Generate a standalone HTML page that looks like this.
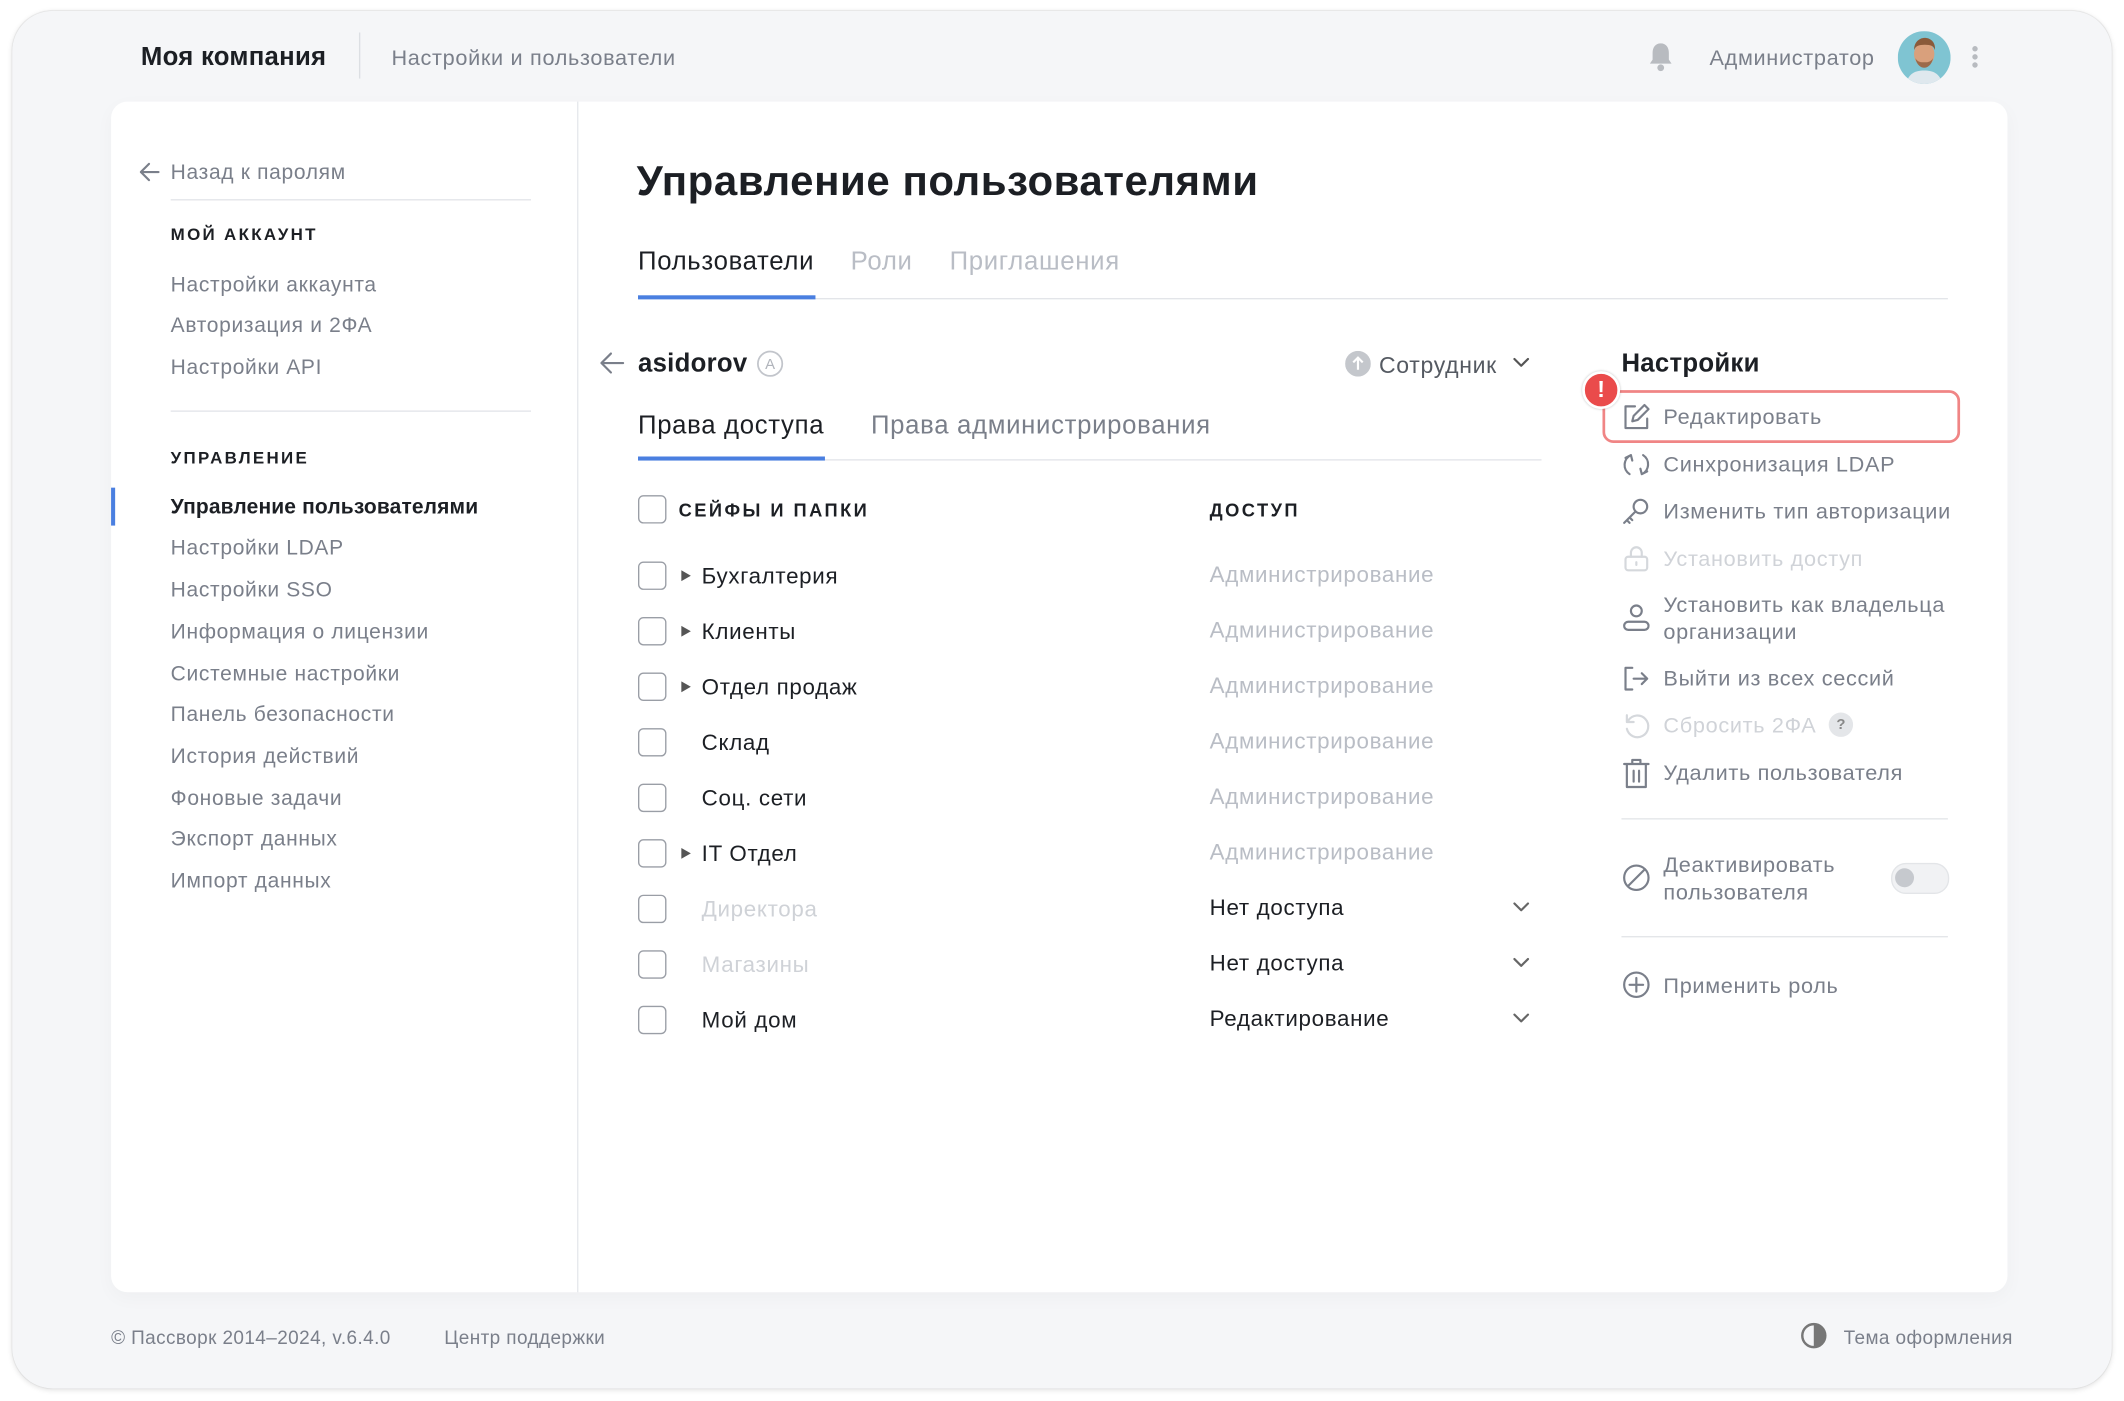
<!DOCTYPE html>
<html><head><meta charset="utf-8"><style>
html,body{margin:0;padding:0;background:#fff;width:2124px;height:1400px;overflow:hidden}
#s{position:absolute;left:0;top:0;width:1568px;height:1034px;transform:scale(1.35459);transform-origin:0 0;font-family:"Liberation Sans","DejaVu Sans",sans-serif}
.frame{position:absolute;left:9px;top:8px;width:1550px;height:1017px;background:#f5f6f8;border-radius:30px;box-shadow:0 1px 4px rgba(0,0,0,.12),0 0 1px rgba(0,0,0,.15)}
.card{position:absolute;left:82px;top:75px;width:1400px;height:879px;background:#fff;border-radius:12px;box-shadow:0 4px 14px rgba(0,0,0,.03)}
.t{position:absolute;white-space:nowrap;transform:translateY(calc(-50% + 1.5px));line-height:1.2;letter-spacing:0.5px}
.g{color:#7a7f8a}.lg{color:#b9bdc5}.d{color:#1c1f24}
.hr{position:absolute;height:1px;background:#e3e5e9}
.cb{position:absolute;width:19px;height:19px;border:1.5px solid #9a9ea6;border-radius:4px;transform:translateY(-50%)}
.tri{position:absolute;width:0;height:0;border-left:7px solid #555;border-top:4px solid transparent;border-bottom:4px solid transparent;transform:translateY(-50%)}
svg{position:absolute}
.ic{fill:none;stroke:#7a7f8a;stroke-width:1.6;stroke-linecap:round;stroke-linejoin:round}
</style></head><body><div id="s">
<div class="frame"></div>
<div class="t d" style="left:104px;top:42px;font-size:19px;font-weight:bold;letter-spacing:0.2px">Моя компания</div>
<div style="position:absolute;left:265px;top:24px;width:1px;height:34px;background:#dcdfe3"></div>
<div class="t g" style="left:289px;top:42px;font-size:16px">Настройки и пользователи</div>
<svg style="left:1215px;top:30px" width="22" height="24" viewBox="0 0 22 24"><path d="M11 2c-4 0-6 3-6 7v5l-2 3h16l-2-3V9c0-4-2-7-6-7z" fill="#b8bbc0"/><circle cx="11" cy="20" r="2.5" fill="#b8bbc0"/></svg>
<div class="t g" style="left:1262px;top:42px;font-size:16px">Администратор</div>
<svg style="left:1401px;top:23px" width="39" height="39" viewBox="0 0 39 39"><defs><clipPath id="c"><circle cx="19.5" cy="19.5" r="19.5"/></clipPath></defs><g clip-path="url(#c)"><rect width="39" height="39" fill="#7fc4d2"/><path d="M6 39c2-8 7-10 13.5-10S31 31 33 39z" fill="#dfe8ee"/><ellipse cx="19.5" cy="17" rx="7.5" ry="9" fill="#d9a07c"/><path d="M12 14c0-6 4-9 8-9s8 3 7.5 9c-1-3-3-4-7.5-4s-7 1-8 4z" fill="#8a5a3a"/><path d="M13 20c1 5 4 7 6.5 7s5.5-2 6.5-7c-2 3-4 3-6.5 3s-4.5 0-6.5-3z" fill="#9b6a4a"/></g></svg>
<div style="position:absolute;left:1456px;top:34px;width:4px;height:4px;border-radius:2px;background:#b8bbc0;box-shadow:0 6px 0 #b8bbc0,0 12px 0 #b8bbc0"></div>

<div class="card"></div>
<div style="position:absolute;left:426px;top:75px;width:1px;height:879px;background:#e6e8ec"></div>

<svg style="left:102px;top:119px" width="17" height="16" viewBox="0 0 17 16"><path class="ic" d="M15 8H2M8 2L2 8l6 6"/></svg>
<div class="t g" style="left:126px;top:127px;font-size:15.5px">Назад к паролям</div>
<div class="hr" style="left:126px;top:147px;width:266px"></div>
<div class="t d" style="left:126px;top:172px;font-size:12.5px;font-weight:bold;letter-spacing:1.7px">МОЙ АККАУНТ</div>
<div class="t g" style="left:126px;top:210px;font-size:15.5px">Настройки аккаунта</div>
<div class="t g" style="left:126px;top:240px;font-size:15.5px">Авторизация и 2ФА</div>
<div class="t g" style="left:126px;top:271px;font-size:15.5px">Настройки API</div>
<div class="hr" style="left:126px;top:303px;width:266px"></div>
<div class="t d" style="left:126px;top:337px;font-size:12.5px;font-weight:bold;letter-spacing:1.7px">УПРАВЛЕНИЕ</div>
<div style="position:absolute;left:82px;top:360px;width:3px;height:28px;background:#4a7fe0"></div>
<div class="t d" style="left:126px;top:374px;font-size:15.5px;font-weight:bold;letter-spacing:0.1px">Управление пользователями</div>
<div class="t g" style="left:126px;top:404px;font-size:15.5px">Настройки LDAP</div>
<div class="t g" style="left:126px;top:435px;font-size:15.5px">Настройки SSO</div>
<div class="t g" style="left:126px;top:466px;font-size:15.5px">Информация о лицензии</div>
<div class="t g" style="left:126px;top:497px;font-size:15.5px">Системные настройки</div>
<div class="t g" style="left:126px;top:527px;font-size:15.5px">Панель безопасности</div>
<div class="t g" style="left:126px;top:558px;font-size:15.5px">История действий</div>
<div class="t g" style="left:126px;top:589px;font-size:15.5px">Фоновые задачи</div>
<div class="t g" style="left:126px;top:619px;font-size:15.5px">Экспорт данных</div>
<div class="t g" style="left:126px;top:650px;font-size:15.5px">Импорт данных</div>

<div class="t d" style="left:470px;top:132px;font-size:31px;font-weight:bold;letter-spacing:0.4px">Управление пользователями</div>
<div class="t d" style="left:471px;top:193px;font-size:19px">Пользователи</div>
<div class="t lg" style="left:628px;top:193px;font-size:19px">Роли</div>
<div class="t lg" style="left:701px;top:193px;font-size:19px">Приглашения</div>
<div class="hr" style="left:471px;top:220px;width:967px"></div>
<div style="position:absolute;left:471px;top:218px;width:131px;height:3px;background:#4a7fe0"></div>

<svg style="left:442px;top:259px" width="20" height="18" viewBox="0 0 20 18"><path class="ic" d="M18 9H2M9 2L2 9l7 7"/></svg>
<div class="t d" style="left:471px;top:268px;font-size:19px;font-weight:bold;letter-spacing:0.2px">asidorov</div>
<svg style="left:558px;top:258px" width="21" height="21" viewBox="0 0 21 21"><circle cx="10.5" cy="10.5" r="9" fill="none" stroke="#c2c5cb" stroke-width="1.3"/><text x="10.5" y="14.5" font-size="11" text-anchor="middle" fill="#b0b4bb" font-family="Liberation Sans">A</text></svg>
<svg style="left:993px;top:259px" width="19" height="19" viewBox="0 0 19 19"><circle cx="9.5" cy="9.5" r="9.5" fill="#c4c7cc"/><path d="M9.5 14V5M6 8.5l3.5-3.5 3.5 3.5" fill="none" stroke="#fff" stroke-width="1.6"/></svg>
<div class="t" style="left:1018px;top:269px;font-size:17px;color:#555a62">Сотрудник</div>
<svg style="left:1116px;top:263px" width="14" height="10" viewBox="0 0 14 10"><path class="ic" d="M2 2l5 5 5-5" style="stroke:#555"/></svg>

<div class="t d" style="left:471px;top:314px;font-size:19px">Права доступа</div>
<div class="t g" style="left:643px;top:314px;font-size:19px">Права администрирования</div>
<div class="hr" style="left:471px;top:339px;width:667px"></div>
<div style="position:absolute;left:471px;top:337px;width:138px;height:3px;background:#4a7fe0"></div>

<div class="cb" style="left:471px;top:376px"></div>
<div class="t d" style="left:501px;top:376px;font-size:13.5px;font-weight:bold;letter-spacing:1.8px">СЕЙФЫ И ПАПКИ</div>
<div class="t d" style="left:893px;top:376px;font-size:13.5px;font-weight:bold;letter-spacing:1.8px">ДОСТУП</div>

<div class="cb" style="left:471px;top:425px"></div><div class="tri" style="left:503px;top:425px"></div><div class="t d" style="left:518px;top:425px;font-size:16.5px">Бухгалтерия</div><div class="t lg" style="left:893px;top:424px;font-size:16.5px">Администрирование</div>
<div class="cb" style="left:471px;top:466px"></div><div class="tri" style="left:503px;top:466px"></div><div class="t d" style="left:518px;top:466px;font-size:16.5px">Клиенты</div><div class="t lg" style="left:893px;top:465px;font-size:16.5px">Администрирование</div>
<div class="cb" style="left:471px;top:507px"></div><div class="tri" style="left:503px;top:507px"></div><div class="t d" style="left:518px;top:507px;font-size:16.5px">Отдел продаж</div><div class="t lg" style="left:893px;top:506px;font-size:16.5px">Администрирование</div>
<div class="cb" style="left:471px;top:548px"></div><div class="t d" style="left:518px;top:548px;font-size:16.5px">Склад</div><div class="t lg" style="left:893px;top:547px;font-size:16.5px">Администрирование</div>
<div class="cb" style="left:471px;top:589px"></div><div class="t d" style="left:518px;top:589px;font-size:16.5px">Соц. сети</div><div class="t lg" style="left:893px;top:588px;font-size:16.5px">Администрирование</div>
<div class="cb" style="left:471px;top:630px"></div><div class="tri" style="left:503px;top:630px"></div><div class="t d" style="left:518px;top:630px;font-size:16.5px">IT Отдел</div><div class="t lg" style="left:893px;top:629px;font-size:16.5px">Администрирование</div>
<div class="cb" style="left:471px;top:671px"></div><div class="t" style="left:518px;top:671px;font-size:16.5px;color:#cfd2d7">Директора</div><div class="t d" style="left:893px;top:670px;font-size:16.5px">Нет доступа</div>
<div class="cb" style="left:471px;top:712px"></div><div class="t" style="left:518px;top:712px;font-size:16.5px;color:#cfd2d7">Магазины</div><div class="t d" style="left:893px;top:711px;font-size:16.5px">Нет доступа</div>
<div class="cb" style="left:471px;top:753px"></div><div class="t d" style="left:518px;top:753px;font-size:16.5px">Мой дом</div><div class="t d" style="left:893px;top:752px;font-size:16.5px">Редактирование</div>
<svg style="left:1116px;top:665px" width="14" height="10" viewBox="0 0 14 10"><path class="ic" d="M2 2l5 5 5-5" style="stroke:#666"/></svg>
<svg style="left:1116px;top:706px" width="14" height="10" viewBox="0 0 14 10"><path class="ic" d="M2 2l5 5 5-5" style="stroke:#666"/></svg>
<svg style="left:1116px;top:747px" width="14" height="10" viewBox="0 0 14 10"><path class="ic" d="M2 2l5 5 5-5" style="stroke:#666"/></svg>

<div class="t d" style="left:1197px;top:268px;font-size:19px;font-weight:bold;letter-spacing:0.2px">Настройки</div>
<div style="position:absolute;left:1183px;top:288px;width:260px;height:35px;border:2px solid #f08585;border-radius:8px"></div>
<div style="position:absolute;left:1168px;top:274px;width:24px;height:24px;border-radius:50%;background:#ea4b4b;border:2px solid #fff;box-shadow:0 0 2px rgba(0,0,0,.25);color:#fff;font-weight:bold;font-size:17px;text-align:center;line-height:24px">!</div>
<svg style="left:1197px;top:297px" width="22" height="22" viewBox="0 0 22 22"><path class="ic" d="M10 3H3v16h16v-7M8 14l1-4 8-8 3 3-8 8z"/></svg>
<div class="t g" style="left:1228px;top:307px;font-size:16px">Редактировать</div>
<svg style="left:1197px;top:332px" width="22" height="22" viewBox="0 0 22 22"><path class="ic" d="M7 4a8 8 0 0 0-1 14M15 18a8 8 0 0 0 1-14M3 6l4-2 1 4M19 16l-4 2-1-4"/></svg>
<div class="t g" style="left:1228px;top:342px;font-size:16px">Синхронизация LDAP</div>
<svg style="left:1197px;top:367px" width="22" height="22" viewBox="0 0 22 22"><circle class="ic" cx="14" cy="7" r="5"/><path class="ic" d="M10 11l-8 8M4 17l2 2M6 15l2 2"/></svg>
<div class="t g" style="left:1228px;top:377px;font-size:16px">Изменить тип авторизации</div>
<svg style="left:1197px;top:401px" width="22" height="22" viewBox="0 0 22 22"><rect class="ic" x="3" y="10" width="16" height="10" rx="2" style="stroke:#d5d8dc"/><path class="ic" d="M7 10V7a4 4 0 0 1 8 0v3M11 14v2" style="stroke:#d5d8dc"/></svg>
<div class="t" style="left:1228px;top:412px;font-size:16px;color:#d0d3d8">Установить доступ</div>
<svg style="left:1197px;top:444px" width="22" height="24" viewBox="0 0 22 24"><circle class="ic" cx="11" cy="7" r="4"/><rect class="ic" x="2" y="15" width="18" height="6" rx="3"/></svg>
<div class="t g" style="left:1228px;top:446px;font-size:16px">Установить как владельца</div>
<div class="t g" style="left:1228px;top:466px;font-size:16px">организации</div>
<svg style="left:1197px;top:490px" width="22" height="22" viewBox="0 0 22 22"><path class="ic" d="M8 3H3v16h5M9 11h10M15 7l4 4-4 4"/></svg>
<div class="t g" style="left:1228px;top:500px;font-size:16px">Выйти из всех сессий</div>
<svg style="left:1197px;top:525px" width="22" height="22" viewBox="0 0 22 22"><path class="ic" d="M5 7a8 8 0 1 1-1 6M4 3v5h5" style="stroke:#d5d8dc"/></svg>
<div class="t" style="left:1228px;top:535px;font-size:16px;color:#d0d3d8">Сбросить 2ФА</div>
<div style="position:absolute;left:1350px;top:526px;width:18px;height:18px;border-radius:50%;background:#e4e6e9;color:#888;font-size:11px;font-weight:bold;text-align:center;line-height:18px">?</div>
<svg style="left:1197px;top:559px" width="22" height="24" viewBox="0 0 22 24"><path class="ic" d="M2 5h18M8 5V2h6v3M4 5v17h14V5M9 10v8M13 10v8"/></svg>
<div class="t g" style="left:1228px;top:570px;font-size:16px">Удалить пользователя</div>
<div class="hr" style="left:1197px;top:604px;width:241px"></div>
<svg style="left:1197px;top:637px" width="22" height="22" viewBox="0 0 22 22"><circle class="ic" cx="11" cy="11" r="9"/><path class="ic" d="M5 17L17 5"/></svg>
<div class="t g" style="left:1228px;top:638px;font-size:16px">Деактивировать</div>
<div class="t g" style="left:1228px;top:658px;font-size:16px">пользователя</div>
<div style="position:absolute;left:1396px;top:637px;width:41px;height:21px;border-radius:11px;background:#f1f2f4;border:1px solid #e3e5e8"></div>
<div style="position:absolute;left:1399px;top:641px;width:14px;height:14px;border-radius:50%;background:#c6c9ce"></div>
<div class="hr" style="left:1197px;top:691px;width:241px"></div>
<svg style="left:1197px;top:716px" width="22" height="22" viewBox="0 0 22 22"><circle class="ic" cx="11" cy="11" r="9"/><path class="ic" d="M11 6v10M6 11h10"/></svg>
<div class="t g" style="left:1228px;top:727px;font-size:16px">Применить роль</div>

<div class="t g" style="left:82px;top:986px;font-size:14px;letter-spacing:0.3px">© Пассворк 2014–2024, v.6.4.0</div>
<div class="t g" style="left:328px;top:986px;font-size:14px;letter-spacing:0.3px">Центр поддержки</div>
<svg style="left:1328px;top:975px" width="22" height="22" viewBox="0 0 22 22"><circle cx="11" cy="11" r="8.5" fill="none" stroke="#777" stroke-width="1.8"/><path d="M11 2.5a8.5 8.5 0 0 1 0 17z" fill="#777"/></svg>
<div class="t g" style="left:1361px;top:986px;font-size:14px;letter-spacing:0.3px">Тема оформления</div>
</div></body></html>
